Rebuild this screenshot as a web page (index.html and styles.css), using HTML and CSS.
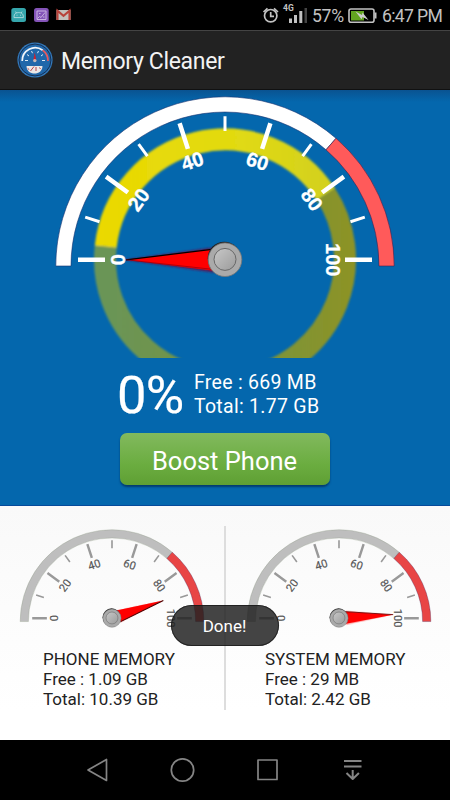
FILE: index.html
```html
<!DOCTYPE html>
<html lang="en">
<head>
<meta charset="utf-8">
<title>Memory Cleaner</title>
<link rel="stylesheet" href="styles.css">
</head>
<body>
<svg class="defs" width="0" height="0" aria-hidden="true">
  <defs>
    <linearGradient id="bright" gradientUnits="userSpaceOnUse" x1="94" y1="0" x2="335" y2="0">
      <stop offset="0" stop-color="#ebd900"/><stop offset=".6" stop-color="#e1da12"/><stop offset="1" stop-color="#d2d01f"/>
    </linearGradient>
    <linearGradient id="dim" gradientUnits="userSpaceOnUse" x1="94" y1="0" x2="356" y2="0">
      <stop offset="0" stop-color="#6a9558"/><stop offset=".5" stop-color="#749443"/><stop offset="1" stop-color="#8d9325"/>
    </linearGradient>
    <linearGradient id="metal" x1="0" y1="0" x2="1" y2="1">
      <stop offset="0" stop-color="#c8c8c8"/><stop offset="1" stop-color="#9b9b9b"/>
    </linearGradient>
    <filter id="soft"><feGaussianBlur stdDeviation=".9"/></filter>
    <clipPath id="ringclip"><rect x="80" y="90" width="290" height="268"/></clipPath>
    <symbol id="dial" viewBox="50 90 350 200">
      <path class="arc" d="M55.8 266A169.2 169.2 0 0 1 336 138.3L326 149.8A154 154 0 0 0 71 266Z"/>
      <path class="arc-red" d="M336 138.3A169.2 169.2 0 0 1 394.2 266H379A154 154 0 0 0 326 149.8Z"/>
      <path class="major" d="M78 259.8H105M345 259.8H372M106.1 176.6L127.9 192.5M343.9 176.6L322.1 192.5M179.6 123.2L187.9 148.9M270.4 123.2L262.1 148.9"/>
      <path class="minor" d="M85.2 217.1L99.5 221.7M364.8 217.1L350.5 221.7M138.6 144.1L147.4 156.2M311.4 144.1L302.6 156.2M225 116.2V131"/>
      <g class="nums">
        <text transform="translate(118 259.8) rotate(-90)" dy="7.2">0</text>
        <text transform="translate(138.5 199.5) rotate(-54)" dy="7.2">20</text>
        <text transform="translate(192.3 161) rotate(-18)" dy="7.2">40</text>
        <text transform="translate(257.5 161) rotate(18)" dy="7.2">60</text>
        <text transform="translate(312 199.5) rotate(54)" dy="7.2">80</text>
        <text transform="translate(333.5 259.8) rotate(90)" dy="7.2">100</text>
      </g>
    </symbol>
    <symbol id="hub" viewBox="205 240 40 40">
      <circle cx="224.3" cy="258.3" r="16.6" fill="#222"/>
      <circle cx="225" cy="259.7" r="16.8" fill="#aaa" stroke="#777" stroke-width=".8"/>
      <circle cx="225" cy="259.4" r="11" fill="url(#metal)" stroke="#686868" stroke-width="1"/>
    </symbol>
  </defs>
</svg>
<div class="screen">
  <div class="status">
    <svg class="apps" width="62" height="16" viewBox="11 7 62 16">
      <rect x="11.3" y="8" width="14.7" height="14" rx="2.5" fill="#35a6ac"/>
      <path d="M14 17.6c0-4.2 2-5 4.700-5s4.700.8 4.700 5zM15.500 11.600l1 1.500M22 11.600l-1 1.500M16.500 15.200h1M20 15.200h1" fill="none" stroke="#b5dde0" stroke-width=".9"/>
      <rect x="34" y="8" width="14.700" height="14" rx="2.500" fill="#8454b8"/>
      <path d="M37 11h9v8.500h-9zM37.500 18.500l2-2 1.500 1 4-5M39 13.500h1.500M43 17h1.500" fill="none" stroke="#d0bde4" stroke-width=".9"/>
      <rect x="56.500" y="10" width="14" height="10" fill="#c4c0bc"/>
      <path d="M57.500 20V10.800l6 5 6-5V20" fill="none" stroke="#b8423a" stroke-width="2.100"/>
    </svg>
    <div class="right">
      <svg width="47" height="20" viewBox="262 4 47 20">
        <g fill="none" stroke="#c2c2c2" stroke-width="1.700"><circle cx="270.700" cy="15.700" r="6.200"/><path d="M270.700 12v4.300h3.300M263.500 12l4-3.700M278 12l-4-3.700"/></g>
        <path fill="#c2c2c2" d="M289 18.500h3V23h-3zM294 15h3v8h-3zM299.300 11h3v12h-3z"/><path fill="#444" d="M304.500 8h2.500v15h-2.500z"/>
        <text class="net" x="283" y="11.300">4G</text>
      </svg>
      <span class="pct">57%</span>
      <svg width="29" height="16" viewBox="348 8 29 16">
        <rect x="349" y="9" width="25" height="13.300" rx="2" fill="none" stroke="#c2c2c2" stroke-width="1.600"/>
        <path d="M375.500 12.500v6" stroke="#c2c2c2" stroke-width="2"/><path d="M351 11h13v9.500h-13z" fill="#62a420"/>
        <path d="M355.500 11.500l6.500 3.500.5-2.500 6 7.500-6-3-1 2.200z" fill="#ccc"/>
      </svg>
      <span class="clock">6:47 PM</span>
    </div>
  </div>
  <header class="bar">
    <svg width="36" height="36" viewBox="0 0 36 36">
      <circle cx="18" cy="18" r="17.600" fill="#3379bb"/><circle cx="18" cy="18" r="16" fill="#2067aa" stroke="#152f52" stroke-width="1"/>
      <path d="M5.200 19a13 13 0 0 1 20.500-10.800" fill="none" stroke="#f0f5fa" stroke-width="1.700"/>
      <path d="M25.700 8.200A13 13 0 0 1 31 19" fill="none" stroke="#e45b60" stroke-width="1.700"/>
      <path d="M8 18.500h3M25 18.500h3M10 12.500l2 1.500M26 12.500l-2 1.500M14.500 9l1 2.200M21.500 9l-1 2.200" stroke="#dce9f5" stroke-width="1"/>
      <path d="M17.800 10.500l1.500 8h-3z" fill="#d41e29"/><circle cx="17.800" cy="18.600" r="1.700" fill="#c4b9b9"/>
      <path d="M9.500 24h16c0 10-16 10-16 0z" fill="#ebe7e6"/><path d="M13.500 29l3.500-4.500M19 25v4M22.500 25.500l1 1.500M10.700 26.500l1.500 1" stroke="#b4424a" stroke-width="1"/>
    </svg>
    <h1>Memory Cleaner</h1>
  </header>
  <main class="hero">
    <svg class="gauge" width="350" height="270" viewBox="50 90 350 270">
      <g clip-path="url(#ringclip)"><g filter="url(#soft)" fill="none" stroke-width="22">
        <path d="M105.700 246.600A120 120 0 1 0 325.600 194" stroke="url(#dim)"/>
        <path d="M105.700 246.600A120 120 0 0 1 325.600 194" stroke="url(#bright)"/>
      </g></g>
      <use href="#dial" x="50" y="90" width="350" height="200"/>
      <path d="M125 259.800L214 247.500V272.500Z" fill="#5c1755" filter="url(#soft)"/>
      <path d="M126 259.800L214 248.700V270.700Z" fill="#f00"/>
      <path d="M126 259.800L214 249.200" stroke="#000" stroke-width="1.200"/>
      <path d="M126 259.800L214 269.500" stroke="#8d0010" stroke-width=".7"/>
      <use href="#hub" x="205" y="240" width="40" height="40"/>
    </svg>
    <div class="usage">
      <div class="percent">0%</div>
      <div class="sizes"><div class="free">Free : 669 MB</div><div class="total">Total: 1.77 GB</div></div>
    </div>
    <button class="boost">Boost Phone</button>
  </main>
  <section class="panels">
    <div class="panel phone">
      <svg class="mini" width="190" height="108.600" viewBox="50 90 350 200">
        <use href="#dial" x="50" y="90" width="350" height="200"/>
        <g transform="rotate(-19 225 259.700)">
          <path d="M324 259.700L237 249V272Z" fill="#f77" filter="url(#soft)"/><path d="M325 259.700L237 249V271Z" fill="#f00"/><path d="M325 259.700L237 271" stroke="#400" stroke-width="1.800"/>
        </g>
        <use href="#hub" x="205" y="240" width="40" height="40"/>
      </svg>
      <div class="info"><div class="l1">PHONE MEMORY</div><div class="l2">Free : 1.09 GB</div><div class="l3">Total: 10.39 GB</div></div>
    </div>
    <div class="divider"></div>
    <div class="panel system">
      <svg class="mini" width="190" height="108.600" viewBox="50 90 350 200">
        <use href="#dial" x="50" y="90" width="350" height="200"/>
        <g transform="rotate(-3.700 225 259.700)">
          <path d="M324 259.700L237 247V273Z" fill="#f99" filter="url(#soft)"/><path d="M325 259.700L237 248.500V271Z" fill="#f00"/><path d="M325 259.700L237 248.500" stroke="#600" stroke-width="1.500"/>
        </g>
        <use href="#hub" x="205" y="240" width="40" height="40"/>
      </svg>
      <div class="info"><div class="l1">SYSTEM MEMORY</div><div class="l2">Free : 29 MB</div><div class="l3">Total: 2.42 GB</div></div>
    </div>
  </section>
  <nav class="nav">
    <svg width="450" height="60" viewBox="0 740 450 60" fill="none" stroke="#858585" stroke-width="1.700" stroke-linejoin="round">
      <path d="M88 770L106.500 759.500V780.500Z"/><circle cx="182.500" cy="770" r="11.200"/><rect x="258" y="760" width="19" height="19.500"/>
      <path d="M344 761h17.500M344 766.500h17.500M352.700 770v9M346.500 773l6.200 6 6.200-6" stroke-width="2"/>
    </svg>
  </nav>
  <div class="toast">Done!</div>
</div>
</body>
</html>
```
FILE: styles.css
```css
* { box-sizing: border-box; }
body { margin: 0; font-family: Roboto, sans-serif; background: #000; }
.defs { position: absolute; }
.screen { position: relative; width: 450px; height: 800px; overflow: hidden; display: flex; flex-direction: column; }
.status { height: 30px; background: #000; color: #c2c2c2; display: flex; justify-content: space-between; padding: 0 8px 0 11px; font-size: 17.6px; line-height: 32px; }
.apps { margin-top: 7px; }
.right { display: flex; white-space: nowrap; }
.right svg { flex: none; }
.right svg:first-child { margin-top: 4px; }
.right svg:nth-of-type(2) { margin: 8px 5px 0 4px; }
.pct { margin-left: 3px; width: 32px; letter-spacing: -.3px; }
.clock { width: 60px; letter-spacing: -.65px; }
.net { font: bold 8.500px Roboto, sans-serif; fill: #c2c2c2; }
.bar { height: 60px; background: #222; border-top: 1px solid #444; border-bottom: 1px solid #111; display: flex; align-items: center; padding: 0 0 0 17px; gap: 8px; }
.bar h1 { margin: 2px 0 0; font-size: 23px; letter-spacing: -.33px; font-weight: 400; color: #f3f3f3; white-space: nowrap; }
.hero { height: 416px; background: linear-gradient(#0a5391, #0467ad 12px); border-bottom: 1px solid #064a9b; display: flex; flex-direction: column; align-items: center; color: #fff; }
.gauge { flex: none; --arc: #fff; --edge: #16306e; --red: #ff5a5a; --tick: #fff; --num: #fff; --major: 4.500px; --minor: 3px; --weight: 700; --face: "Liberation Sans"; --size: 20px; }
.arc { fill: var(--arc); stroke: var(--edge); stroke-width: .6; }
.arc-red { fill: var(--red); stroke: #402050; stroke-width: .6; }
.major { stroke: var(--tick); stroke-width: var(--major); }
.minor { stroke: var(--tick); stroke-width: var(--minor); }
.nums { font-family: var(--face), Arial, sans-serif; font-size: var(--size); font-weight: var(--weight); fill: var(--num); stroke: var(--num); stroke-width: .3px; text-anchor: middle; }
.usage { align-self: stretch; height: 73px; display: flex; padding-left: 117px; white-space: nowrap; }
.percent { width: 77px; font-size: 52.500px; line-height: 71px; letter-spacing: -.8px; -webkit-text-stroke: .2px #fff; }
.sizes { padding-top: 11px; font-size: 19.500px; letter-spacing: .28px; line-height: 23.500px; }
.boost { width: 210px; height: 52px; padding: 4px 1px 0 0; border: 0; border-radius: 7px; background: linear-gradient(#82b95e, #6bad40 60%, #5f9f34); box-shadow: 0 2px 2px #033c70; color: #fff; font: 25.500px Roboto, sans-serif; }
.panels { height: 234px; background: linear-gradient(#f9f9f9, #fff 204px); display: flex; }
.panel { width: 224px; padding-top: 20px; }
.mini { display: block; margin-left: 17px; --arc: #bebebe; --edge: #8f9a87; --red: #e84545; --tick: #999; --num: #555; --major: 4.500px; --minor: 3px; --weight: 400; --face: Roboto; --size: 20.500px; }
.system .mini { margin-left: 17.500px; }
.info { padding-left: 43px; margin-top: 14px; font-size: 17px; line-height: 20px; color: #222; white-space: nowrap; }
.system .info { padding-left: 39px; }
.divider { width: 2px; height: 184px; margin-top: 20px; background: #ddd; }
.nav { height: 60px; background: #000; }
.nav svg { display: block; }
.toast { position: absolute; left: 171px; top: 605px; width: 108px; height: 41px; padding-right: 1px; border-radius: 20.500px; background: rgba(32, 32, 32, .84); box-shadow: inset 0 0 0 1px rgba(20, 20, 20, .7); color: #fff; font-size: 17px; line-height: 42px; text-align: center; }
```
